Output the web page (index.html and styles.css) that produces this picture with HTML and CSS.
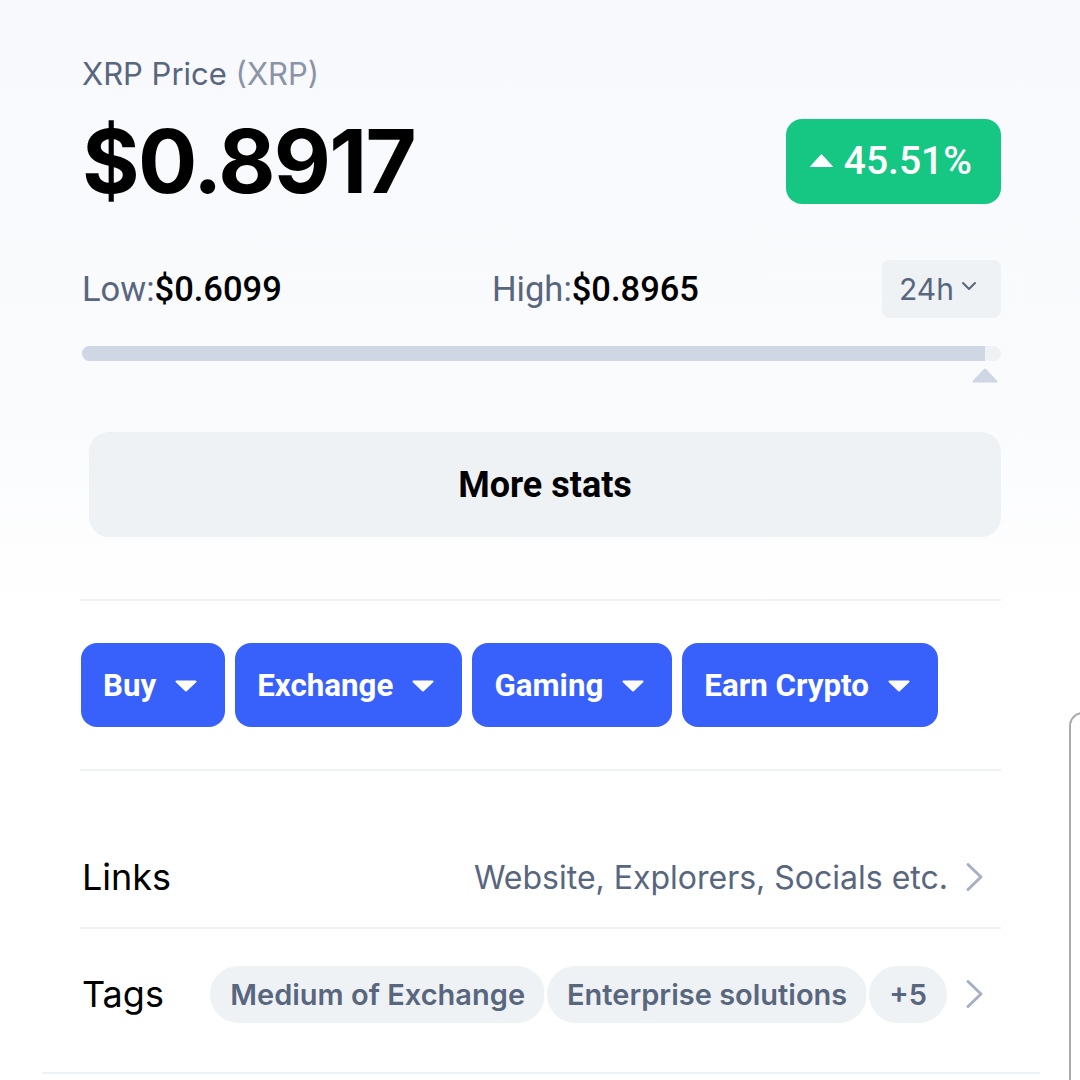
FILE: index.html
```html
<!DOCTYPE html>
<html lang="en">
<head>
<meta charset="utf-8">
<title>XRP Price</title>
<link rel="stylesheet" href="styles.css">
</head>
<body>
<div class="page">
  <div class="content">
    <div class="title"><span class="name">XRP Price</span> <span class="sym">(XRP)</span></div>

    <div class="price-row">
      <div class="price">$0.8917</div>
      <div class="badge">
        <svg class="up" width="23" height="13" viewBox="0 0 23 13"><path d="M11.5 0.5 L22.5 12.5 L0.5 12.5 Z" fill="#fff" stroke="#fff" stroke-linejoin="round" stroke-width="1"/></svg>
        <span>45.51%</span>
      </div>
    </div>

    <div class="range-row">
      <div class="stat"><span class="lbl">Low:</span><span class="val">$0.6099</span></div>
      <div class="stat"><span class="lbl">High:</span><span class="val">$0.8965</span></div>
      <div class="period">
        <span>24h</span>
        <svg width="16" height="10" viewBox="0 0 16 10"><path d="M2 2 L8 8 L14 2" fill="none" stroke="#58667e" stroke-width="2" stroke-linecap="round" stroke-linejoin="round"/></svg>
      </div>
    </div>

    <div class="bar"><div class="bar-fill" style="width:98.26%"></div></div>
    <div class="marker-row">
      <svg width="26" height="15" viewBox="0 0 26 15"><path d="M13 1.5 L24.5 13.5 L1.5 13.5 Z" fill="#cfd6e4" stroke="#cfd6e4" stroke-width="2" stroke-linejoin="round"/></svg>
    </div>

    <div class="more-stats">More stats</div>

    <div class="divider first"></div>

    <div class="actions">
      <div class="action">Buy<svg class="caret" width="22" height="12" viewBox="0 0 22 12"><path d="M1.5 1.5 L20.5 1.5 L11 10.5 Z" fill="#fff" stroke="#fff" stroke-width="2" stroke-linejoin="round"/></svg></div>
      <div class="action">Exchange<svg class="caret" width="22" height="12" viewBox="0 0 22 12"><path d="M1.5 1.5 L20.5 1.5 L11 10.5 Z" fill="#fff" stroke="#fff" stroke-width="2" stroke-linejoin="round"/></svg></div>
      <div class="action">Gaming<svg class="caret" width="22" height="12" viewBox="0 0 22 12"><path d="M1.5 1.5 L20.5 1.5 L11 10.5 Z" fill="#fff" stroke="#fff" stroke-width="2" stroke-linejoin="round"/></svg></div>
      <div class="action">Earn Crypto<svg class="caret" width="22" height="12" viewBox="0 0 22 12"><path d="M1.5 1.5 L20.5 1.5 L11 10.5 Z" fill="#fff" stroke="#fff" stroke-width="2" stroke-linejoin="round"/></svg></div>
    </div>

    <div class="divider second"></div>

    <div class="info-row links">
      <div class="info-label">Links</div>
      <div class="info-right">
        <span class="links-text">Website, Explorers, Socials etc.</span>
        <svg class="chev" width="24" height="30" viewBox="0 0 24 30"><path d="M5 2.5 L18 15 L5 27.5" fill="none" stroke="#a6b0c3" stroke-width="3" stroke-linecap="round" stroke-linejoin="round"/></svg>
      </div>
    </div>

    <div class="divider third"></div>

    <div class="info-row tags">
      <div class="info-label">Tags</div>
      <div class="info-right tags-right">
        <div class="pills">
          <span class="pill">Medium of Exchange</span>
          <span class="pill">Enterprise solutions</span>
          <span class="pill">+5</span>
        </div>
        <svg class="chev" width="24" height="30" viewBox="0 0 24 30"><path d="M5 2.5 L18 15 L5 27.5" fill="none" stroke="#a6b0c3" stroke-width="3" stroke-linecap="round" stroke-linejoin="round"/></svg>
      </div>
    </div>

    <div class="divider bottom"></div>
  </div>
  <div class="panel-edge"></div>
</div>
</body>
</html>
```

FILE: styles.css
```css
* { box-sizing: border-box; }

html, body {
  margin: 0;
  padding: 0;
}

body {
  width: 1080px;
  height: 1080px;
  overflow: hidden;
  background: linear-gradient(180deg, #f7f9fc 0, #fafbfd 420px, #ffffff 620px);
  font-family: "Inter", "Noto Sans", sans-serif;
  color: #000;
}

.page {
  position: relative;
  width: 1080px;
  height: 1080px;
}

.content {
  padding: 52px 79px 0 82px;
}

.title {
  font-size: 31px;
  line-height: 44px;
  font-weight: 400;
}
.title .name { color: #58667e; }
.title .sym { color: #8a94a6; }

.price-row {
  display: flex;
  justify-content: space-between;
  align-items: center;
  margin-top: 20px;
  height: 90px;
}

.price {
  font-size: 88px;
  font-weight: 700;
  letter-spacing: -1.7px;
  line-height: 90px;
}

.badge {
  display: flex;
  align-items: center;
  gap: 11px;
  height: 85px;
  padding: 0 29px 0 24px;
  background: #16c784;
  border-radius: 16px;
  color: #fff;
  font-family: "Roboto", sans-serif;
  font-weight: 500;
  font-size: 39px;
}
.badge .up { margin-top: -2px; }

.range-row {
  display: grid;
  grid-template-columns: 410px 1fr auto;
  align-items: center;
  margin-top: 54px;
  height: 58px;
}

.stat {
  font-family: "Roboto", sans-serif;
  font-size: 34.5px;
}
.stat .lbl { color: #58667e; }
.stat .val { color: #000; font-weight: 500; }

.period {
  display: flex;
  align-items: center;
  gap: 7px;
  height: 58px;
  padding: 0 24px 0 17px;
  background: #eff2f5;
  border-radius: 8px;
  color: #58667e;
  font-size: 30px;
}
.period svg { margin-top: -6px; }

.bar {
  margin-top: 28px;
  height: 15px;
  border-radius: 8px;
  background: #eff2f5;
  overflow: hidden;
}
.bar-fill {
  height: 100%;
  background: #cfd6e4;
}

.marker-row {
  display: flex;
  justify-content: flex-end;
  margin-top: 7px;
  padding-right: 3px;
  height: 15px;
}
.marker-row svg { display: block; }

.more-stats {
  display: flex;
  align-items: center;
  justify-content: center;
  margin: 49px 0 0 7px;
  height: 105px;
  border-radius: 20px;
  background: #eff2f5;
  font-family: "Roboto", sans-serif;
  font-weight: 700;
  font-size: 36px;
  color: #000;
}

.divider {
  height: 2px;
  background: #eff2f5;
}
.divider.first { margin-top: 62px; margin-left: -2px; }
.divider.second { margin-top: 42px; margin-left: -2px; }
.divider.third { margin-left: -2px; }
.divider.bottom { margin: 0 -39px 0 -40px; }

.actions {
  display: flex;
  gap: 10px;
  margin-top: 42px;
  margin-left: -1px;
}

.action {
  display: flex;
  align-items: center;
  gap: 19px;
  height: 84px;
  padding: 0 28px 0 22px;
  background: #3861fb;
  border-radius: 16px;
  color: #fff;
  font-family: "Roboto", sans-serif;
  font-weight: 700;
  font-size: 31.3px;
}
.action .caret { margin-top: 1px; }

.info-row {
  display: flex;
  align-items: center;
  justify-content: space-between;
}
.info-row.links {
  padding-top: 56px;
  height: 156px;
}
.info-row.tags {
  height: 143px;
  padding-bottom: 13px;
}

.info-label {
  font-size: 36px;
  color: #000;
}

.info-right {
  display: flex;
  align-items: center;
  gap: 15px;
  padding-right: 14px;
}
.tags-right { gap: 13px; }

.links-text {
  font-size: 32px;
  color: #58667e;
}

.pills {
  display: flex;
  align-items: center;
}

.pill {
  display: flex;
  align-items: center;
  height: 63px;
  padding: 0 20px;
  border: 3px solid #fff;
  border-radius: 32px;
  background: #eff2f5;
  color: #58667e;
  font-size: 29px;
  font-weight: 600;
  margin-left: -4px;
}

.chev { display: block; }

.panel-edge {
  position: absolute;
  left: 1069px;
  top: 712px;
  width: 40px;
  height: 420px;
  border-left: 2px solid #aaaaaa;
  border-top: 2px solid #aaaaaa;
  border-top-left-radius: 14px;
}
```
